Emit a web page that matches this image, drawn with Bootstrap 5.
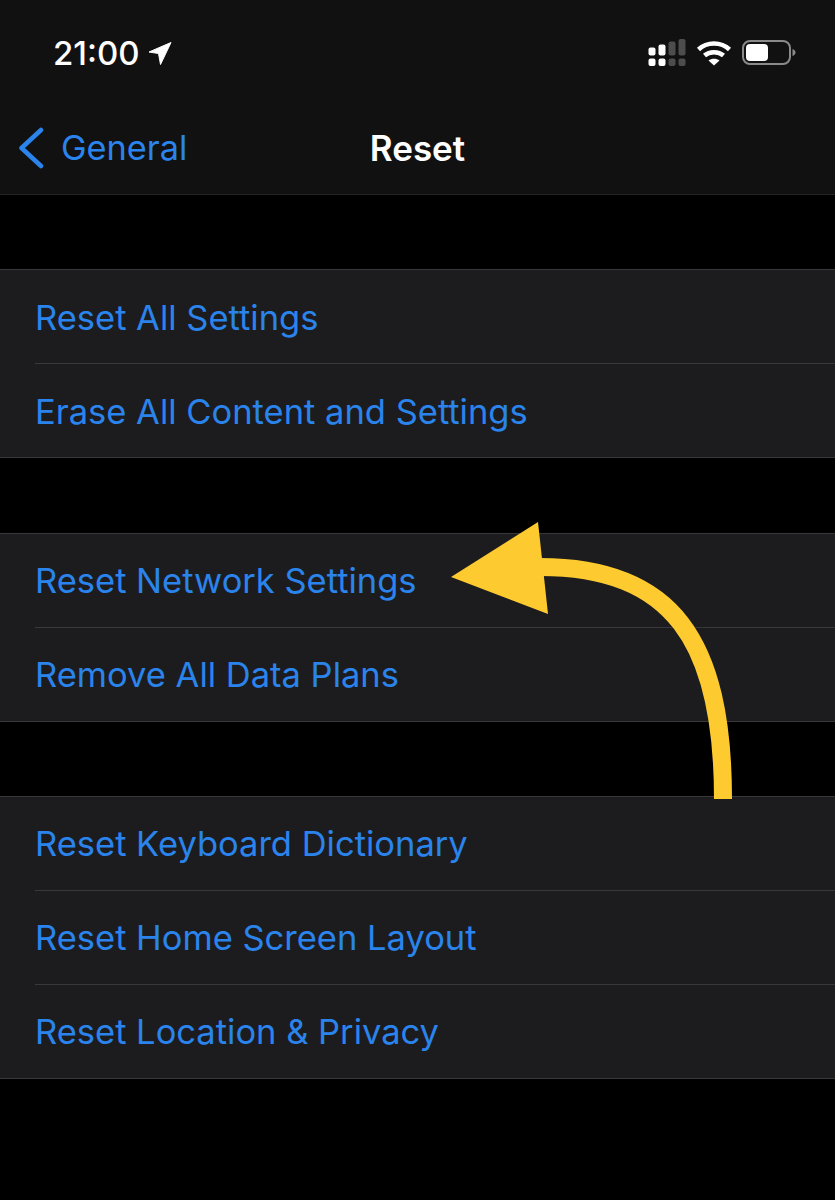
<!DOCTYPE html>
<html lang="en">
<head>
  <meta charset="UTF-8">
  <meta name="viewport" content="width=device-width, initial-scale=1.0">
  <title>Reset</title>
  <link href="https://cdn.jsdelivr.net/npm/bootstrap@5.3.0/dist/css/bootstrap.min.css" rel="stylesheet">
  <style>
    html, body { background-color: #000; }
    body {
      position: relative;
      height: 1200px;
      overflow: hidden;
      font-family: Inter, "Liberation Sans", sans-serif;
      color: #fff;
    }
    .phone-head { background-color: #111112; height: 195px; border-bottom: 1px solid #252527; }
    .status-row { height: 106px; padding: 34px 39px 0 53px; }
    .status-time { font-size: 33px; font-weight: 500; line-height: 38px; letter-spacing: 0; }
    .status-icons { padding-top: 5px; gap: 10px; }
    .nav-row { height: 88px; padding: 0 0 4px 18px; }
    .back-link { color: #2a84ec; font-size: 34.300px; line-height: 40px; text-decoration: none; gap: 15px; }
    .nav-title { font-size: 35px; font-weight: 600; line-height: 40px; left: 0; right: 0; top: 128px; }
    .settings-group { background-color: #1c1c1e; border-top: 1px solid #38383a; border-bottom: 1px solid #38383a; }
    .group-first { margin-top: 74px; }
    .group-mid { margin-top: 75px; }
    .group-last { margin-top: 74px; }
    .settings-row { height: 93px; padding-top: 1px; margin-left: 35px; color: #2a84ec; font-size: 34.500px; line-height: 40px; text-decoration: none; }
    .settings-row + .settings-row { height: 94px; border-top: 1px solid #38383a; }
    .group-first .settings-row { padding-top: 3px; }
    .arrow-over { left: 0; top: 0; }
  </style>
</head>
<body>
  <div class="phone-head">
    <div class="status-row d-flex justify-content-between align-items-start">
      <div class="d-flex align-items-center gap-2">
        <span class="status-time">21:00</span>
        <svg width="24" height="24" viewBox="0 0 24 24"><path d="M1 11 23 1.500 12.500 23.500 10.500 12.500Z" fill="#fff" stroke="#fff" stroke-width="1" stroke-linejoin="round"/></svg>
      </div>
      <div class="status-icons d-flex align-items-center">
        <svg width="38" height="28" viewBox="0 0 38 28">
          <rect x="0.500" y="8.500" width="7" height="8" rx="2" fill="#fff"/>
          <rect x="10.500" y="5.500" width="7" height="11" rx="2" fill="#fff"/>
          <rect x="20.500" y="2.500" width="7" height="14" rx="2" fill="#4d4d4d"/>
          <rect x="30.500" y="0" width="7" height="16.500" rx="2" fill="#4d4d4d"/>
          <rect x="0.500" y="19.500" width="7" height="7.500" rx="2" fill="#fff"/>
          <rect x="10.500" y="19.500" width="7" height="7.500" rx="2" fill="#fff"/>
          <rect x="20.500" y="19.500" width="7" height="7.500" rx="2" fill="#4d4d4d"/>
          <rect x="30.500" y="19.500" width="7" height="7.500" rx="2" fill="#4d4d4d"/>
        </svg>
        <svg width="36" height="28" viewBox="0 0 36 28" fill="none" stroke="#fff" stroke-width="4.500">
          <path d="M2.500 10.500C11 2.500 25 2.500 33.500 10.500"/>
          <path d="M8.500 16.500C13.500 12 22.500 12 27.500 16.500"/>
          <path d="M18 26.500 12.500 21.500C15.500 19 20.500 19 23.500 21.500Z" fill="#fff" stroke="none"/>
        </svg>
        <svg width="54" height="28" viewBox="0 0 54 28">
          <rect x="1" y="2" width="47" height="23" rx="7" fill="none" stroke="#8a8a8a" stroke-width="2"/>
          <rect x="4" y="5" width="22" height="17" rx="4" fill="#fff"/>
          <path d="M50.500 10C53 11 53.500 12.500 53.500 13.500S53 16 50.500 17Z" fill="#8a8a8a"/>
        </svg>
      </div>
    </div>
    <div class="nav-row d-flex align-items-center">
      <a class="back-link d-flex align-items-center" href="#">
        <svg width="28" height="42" viewBox="0 0 28 42" fill="none" stroke="#2a84ec" stroke-width="4.500" stroke-linecap="round" stroke-linejoin="round"><path d="M23 3 3.500 21 23 39"/></svg>
        General
      </a>
    </div>
  </div>
  <div class="nav-title position-absolute text-center">Reset</div>

  <div class="settings-group group-first">
    <a class="settings-row d-flex align-items-center" href="#">Reset All Settings</a>
    <a class="settings-row d-flex align-items-center" href="#">Erase All Content and Settings</a>
  </div>
  <div class="settings-group group-mid">
    <a class="settings-row d-flex align-items-center" href="#">Reset Network Settings</a>
    <a class="settings-row d-flex align-items-center" href="#">Remove All Data Plans</a>
  </div>
  <div class="settings-group group-last">
    <a class="settings-row d-flex align-items-center" href="#">Reset Keyboard Dictionary</a>
    <a class="settings-row d-flex align-items-center" href="#">Reset Home Screen Layout</a>
    <a class="settings-row d-flex align-items-center" href="#">Reset Location &amp; Privacy</a>
  </div>

  <svg class="arrow-over position-absolute" width="835" height="1200" viewBox="0 0 835 1200" fill="none">
    <path d="M723 799C723 640 672 567 540 567" stroke="#fdca2f" stroke-width="18"/>
    <path d="M451 577 538 522 548 614Z" fill="#fdca2f"/>
  </svg>

  <script src="https://cdn.jsdelivr.net/npm/bootstrap@5.3.0/dist/js/bootstrap.bundle.min.js"></script>
</body>
</html>
